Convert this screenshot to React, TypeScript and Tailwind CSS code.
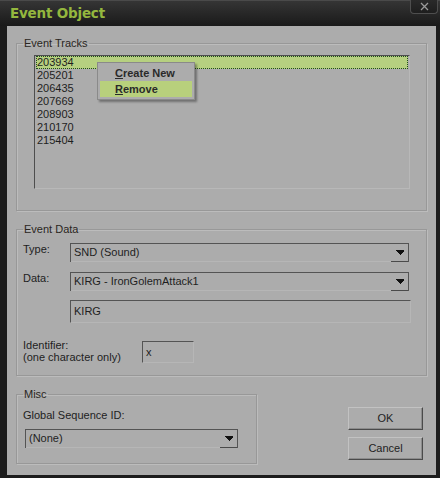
import React from 'react';

const tracks = ['203934', '205201', '206435', '207669', '208903', '210170', '215404'];

function Arrow() {
  return (
    <svg width="8" height="5" viewBox="0 0 8 5" shapeRendering="crispEdges">
      <polygon points="0,0 8,0 8,1 4,5 0,1" fill="#111" />
    </svg>
  );
}

function Combo({ value, width }: { value: string; width: string }) {
  return (
    <div className={`flex h-[19px] border-t border-l border-r border-t-[#545454] border-l-[#545454] border-r-[#545454] ${width}`}>
      <div className="flex-1 flex items-center pl-[3px] border-b border-b-[#b6b6b6] text-[#1e1e1e]">{value}</div>
      <div className="w-[17px] flex items-center justify-center border-b border-b-[#4a4a4a]">
        <Arrow />
      </div>
    </div>
  );
}

function TextBox({ value, className }: { value: string; className: string }) {
  return (
    <div className={`flex items-center pl-[3px] border border-t-[#545454] border-l-[#545454] border-b-[#b6b6b6] border-r-[#b6b6b6] text-[#1e1e1e] ${className}`}>
      {value}
    </div>
  );
}

function Group({ title, className, inner, children }: { title: string; className: string; inner: string; children: React.ReactNode }) {
  return (
    <fieldset className={`border border-[#989898] shadow-[inset_1px_1px_0_#bcbcbc,1px_1px_0_#bcbcbc] ${className}`}>
      <legend className="ml-[6px] px-[1px] leading-[14px] text-[#2a2622]">{title}</legend>
      <div className={inner}>{children}</div>
    </fieldset>
  );
}

function PushButton({ label }: { label: string }) {
  return (
    <div className="w-[75px] h-[23px] flex items-center justify-center border border-t-[#c2c2c2] border-l-[#c2c2c2] border-b-[#4a4a4a] border-r-[#4a4a4a] shadow-[inset_-1px_-1px_0_#8c8c8c] text-[#1e1e1e]">
      {label}
    </div>
  );
}

export default function App() {
  return (
    <div className="relative w-[440px] h-[478px] flex flex-col bg-[#1c1c1c] text-[11px] font-['Liberation_Sans',Arial,sans-serif] select-none">
      {/* title bar */}
      <div className="h-[26px] flex items-center pl-[10px] bg-gradient-to-b from-[#353535] to-[#1a1a1a] border-t border-t-[#4a4a4a]">
        <span className="text-[13.5px] font-bold text-[#94b73e] font-['DejaVu_Sans',sans-serif] tracking-[-0.2px]">Event Object</span>
      </div>
      <div className="absolute right-[2px] top-0 w-[28px] h-[14px] flex items-center justify-center border border-t-0 border-[#4e4e4e] rounded-b-[4px] bg-gradient-to-b from-[#2a2a2a] to-[#1e1e1e]">
        <svg width="9" height="9" viewBox="0 0 9 9">
          <path d="M1 1 L8 8 M8 1 L1 8" stroke="#9a9a9a" strokeWidth="1.3" />
        </svg>
      </div>

      <div className="flex-1 flex pl-[7px] pr-[4px] pb-[3px]">
        <div className="relative flex-1 flex flex-col bg-[#acacac]">
          {/* Event Tracks */}
          <Group title="Event Tracks" className="mx-[9px] mt-[10px] h-[175px]" inner="pt-[5px] pl-[17px]">
            <div className="w-[376px] h-[134px] border border-t-[#4e4e4e] border-l-[#4e4e4e] border-b-[#b8b8b8] border-r-[#b8b8b8] pl-[1px] pr-[1px]">
              {tracks.map((t, i) => (
                <div
                  key={t}
                  className={`h-[13px] leading-[13px] pl-[1px] text-[#1e1e1e] ${i === 0 ? 'bg-[#b6d080] outline outline-1 outline-dotted outline-[#1f4a1f] -outline-offset-1' : ''}`}
                >
                  {t}
                </div>
              ))}
            </div>
          </Group>

          {/* Event Data */}
          <Group title="Event Data" className="mx-[9px] mt-[11px] h-[154px]" inner="pt-[7px] pl-[6px] flex flex-col">
            <div className="flex items-start">
              <div className="w-[47px] leading-[13px] text-[#1e1e1e]">Type:</div>
              <Combo value="SND (Sound)" width="w-[339px]" />
            </div>
            <div className="flex items-start mt-[10px]">
              <div className="w-[47px] leading-[13px] text-[#1e1e1e]">Data:</div>
              <Combo value="KIRG - IronGolemAttack1" width="w-[339px]" />
            </div>
            <div className="flex mt-[9px] pl-[47px]">
              <TextBox value="KIRG" className="w-[341px] h-[23px]" />
            </div>
            <div className="flex items-end mt-[16px]">
              <div className="w-[119px] leading-[12px] text-[#1e1e1e]">
                <div>Identifier:</div>
                <div>(one character only)</div>
              </div>
              <TextBox value="x" className="w-[52px] h-[22px]" />
            </div>
          </Group>

          {/* bottom row */}
          <div className="flex mt-[11px]">
            <Group title="Misc" className="ml-[9px] w-[241px] h-[77px]" inner="pt-[6px] pl-[6px]">
              <div className="text-[#1e1e1e]">Global Sequence ID:</div>
              <div className="mt-[5px] ml-[2px]">
                <Combo value="(None)" width="w-[213px]" />
              </div>
            </Group>
            <div className="ml-auto mr-[13px] pt-[20px] flex flex-col gap-[7px]">
              <PushButton label="OK" />
              <PushButton label="Cancel" />
            </div>
          </div>

          {/* context menu */}
          <div className="absolute left-[90px] top-[36px] w-[98px] p-[2px] bg-[#acacac] border border-[#8a8a8a] shadow-[2px_2px_2px_rgba(0,0,0,0.35)]">
            <div className="h-[16px] flex items-center pl-[15px] font-bold text-[#2a2a2a]">
              <span><span className="underline">C</span>reate New</span>
            </div>
            <div className="h-[16px] flex items-center pl-[15px] font-bold text-[#2a2a2a] bg-[#b8d07c]">
              <span><span className="underline">R</span>emove</span>
            </div>
          </div>
        </div>
      </div>
    </div>
  );
}
